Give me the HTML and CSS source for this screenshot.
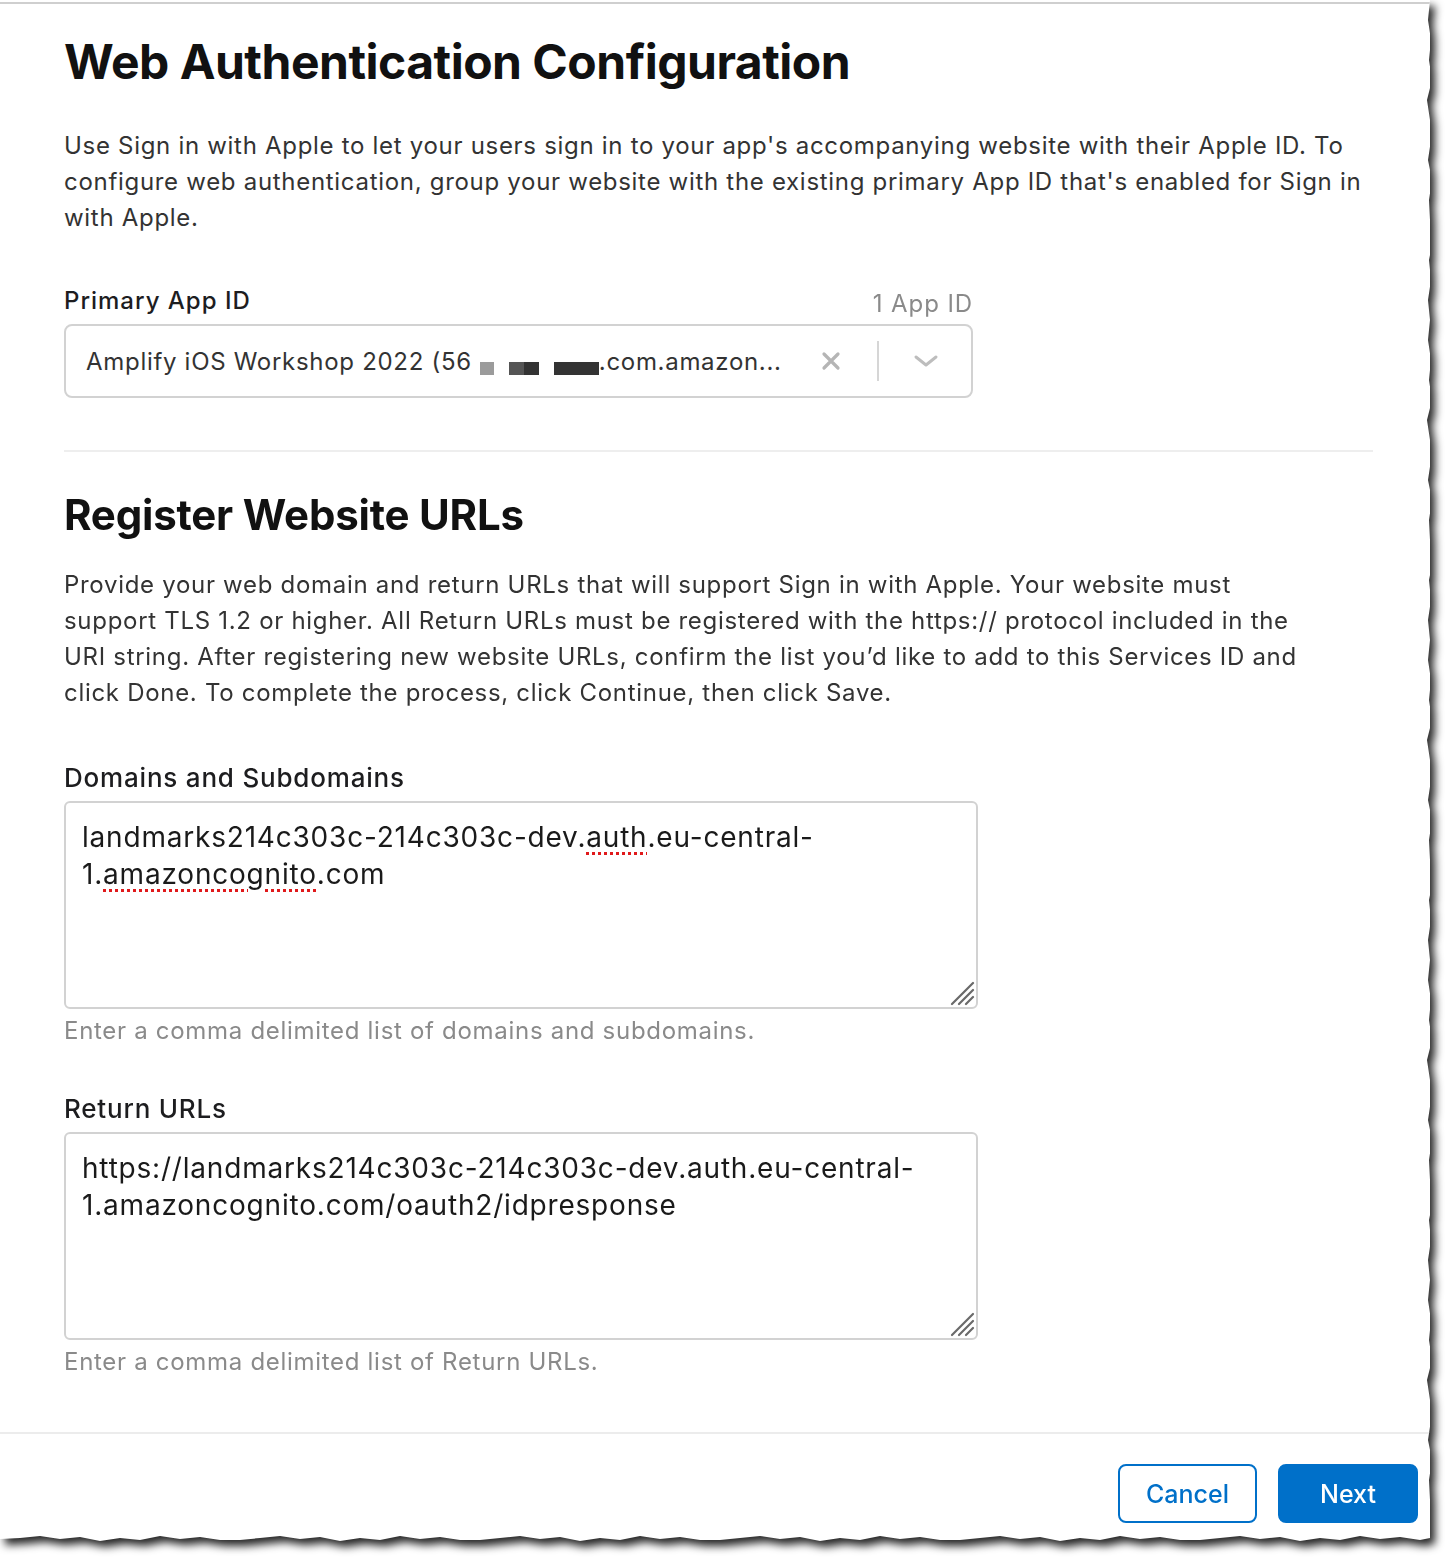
FILE: index.html
```html
<!DOCTYPE html>
<html lang="en">
<head>
<meta charset="utf-8">
<title>Web Authentication Configuration</title>
<link rel="stylesheet" href="styles.css">
</head>
<body>
<div class="frame">
  <div class="page">
    <div class="sheet">
      <main class="main">
        <h1 class="title">Web Authentication Configuration</h1>
        <p class="lead">Use Sign in with Apple to let your users sign in to your app's accompanying website with their Apple ID. To<br>configure web authentication, group your website with the existing primary App ID that's enabled for Sign in<br>with Apple.</p>

        <div class="field-head">
          <span class="label">Primary App ID</span>
          <span class="count">1 App ID</span>
        </div>
        <div class="select">
          <div class="select-value">
            <span>Amplify iOS Workshop 2022 (56</span>
            <span class="redact r1"></span>
            <span class="redact r2"></span>
            <span class="redact r3"></span>
            <span>.com.amazon...</span>
          </div>
          <div class="select-actions">
            <svg class="clear" width="20" height="20" viewBox="0 0 20 20"><path d="M3 3 L17 17 M17 3 L3 17" stroke="#b5b5b5" stroke-width="3.2" stroke-linecap="round" fill="none"/></svg>
            <span class="vsep"></span>
            <svg class="chev" width="26" height="16" viewBox="0 0 26 16"><path d="M3 4 L13 12 L23 4" stroke="#bdbdbd" stroke-width="3" stroke-linecap="round" stroke-linejoin="round" fill="none"/></svg>
          </div>
        </div>

        <hr class="divider">

        <h2 class="subtitle">Register Website URLs</h2>
        <p class="lead lead2">Provide your web domain and return URLs that will support Sign in with Apple. Your website must<br>support TLS 1.2 or higher. All Return URLs must be registered with the https:// protocol included in the<br>URI string. After registering new website URLs, confirm the list you’d like to add to this Services ID and<br>click Done. To complete the process, click Continue, then click Save.</p>

        <div class="label block-label">Domains and Subdomains</div>
        <div class="textarea">
          <div class="ta-text">landmarks214c303c-214c303c-dev.<span class="spell">auth</span>.eu-central-<br>1.<span class="spell">amazoncognito</span>.com</div>
          <svg class="grip" width="26" height="26" viewBox="0 0 26 26"><path d="M24 3 L3 24 M24 10 L10 24 M24 17 L17 24" stroke="#6a6a6a" stroke-width="2.2" stroke-linecap="round" fill="none"/></svg>
        </div>
        <div class="hint">Enter a comma delimited list of domains and subdomains.</div>

        <div class="label block-label second">Return URLs</div>
        <div class="textarea">
          <div class="ta-text">https://landmarks214c303c-214c303c-dev.auth.eu-central-<br>1.amazoncognito.com/oauth2/idpresponse</div>
          <svg class="grip" width="26" height="26" viewBox="0 0 26 26"><path d="M24 3 L3 24 M24 10 L10 24 M24 17 L17 24" stroke="#6a6a6a" stroke-width="2.2" stroke-linecap="round" fill="none"/></svg>
        </div>
        <div class="hint">Enter a comma delimited list of Return URLs.</div>
      </main>
      <footer class="footer">
        <button class="btn btn-secondary" type="button">Cancel</button>
        <button class="btn btn-primary" type="button">Next</button>
      </footer>
    </div>
  </div>
</div>
</body>
</html>
```
FILE: styles.css
```css
* { box-sizing: border-box; }

html, body {
  margin: 0;
  padding: 0;
  background: #ffffff;
}

body {
  font-family: Inter, "Noto Sans", "Liberation Sans", sans-serif;
  color: #1d1d1f;
  width: 1452px;
  height: 1562px;
  overflow: hidden;
}

.frame {
  width: 1430px;
  height: 1541px;
  filter: drop-shadow(5px 6px 4px rgba(0, 0, 0, 0.85));
}

.page {
  width: 100%;
  height: 100%;
  background: #ffffff;
  padding-top: 2px;
  display: flex;
  flex-direction: column;
  clip-path: polygon(
    0 0, 1430px 0,
    1428px 20px, 1431px 40px, 1429px 60px, 1432px 80px, 1427px 100px, 1430px 120px, 1431px 140px, 1428px 160px,
    1432px 180px, 1429px 200px, 1430px 220px, 1433px 240px, 1429px 260px, 1431px 280px, 1428px 300px, 1430px 320px,
    1428px 340px, 1431px 360px, 1429px 380px, 1432px 400px, 1427px 420px, 1430px 440px, 1431px 460px, 1428px 480px,
    1432px 500px, 1429px 520px, 1430px 540px, 1433px 560px, 1429px 580px, 1431px 600px, 1428px 620px, 1430px 640px,
    1428px 660px, 1431px 680px, 1429px 700px, 1432px 720px, 1427px 740px, 1430px 760px, 1431px 780px, 1428px 800px,
    1432px 820px, 1429px 840px, 1430px 860px, 1433px 880px, 1429px 900px, 1431px 920px, 1428px 940px, 1430px 960px,
    1428px 980px, 1431px 1000px, 1429px 1020px, 1432px 1040px, 1427px 1060px, 1430px 1080px, 1431px 1100px, 1428px 1120px,
    1432px 1140px, 1429px 1160px, 1430px 1180px, 1433px 1200px, 1429px 1220px, 1431px 1240px, 1428px 1260px, 1430px 1280px,
    1428px 1300px, 1431px 1320px, 1429px 1340px, 1432px 1360px, 1427px 1380px, 1430px 1400px, 1431px 1420px, 1428px 1440px,
    1432px 1460px, 1429px 1480px, 1430px 1500px, 1433px 1520px, 1430px 1538px,
    1420px 1540px, 1400px 1537px, 1380px 1539px, 1360px 1536px, 1340px 1540px, 1320px 1538px, 1300px 1541px, 1280px 1537px,
    1260px 1539px, 1240px 1536px, 1220px 1538px, 1200px 1540px, 1180px 1540px, 1160px 1537px, 1140px 1539px, 1120px 1536px,
    1100px 1540px, 1080px 1538px, 1060px 1541px, 1040px 1537px, 1020px 1539px, 1000px 1536px, 980px 1538px, 960px 1540px,
    940px 1540px, 920px 1537px, 900px 1539px, 880px 1536px, 860px 1540px, 840px 1538px, 820px 1541px, 800px 1537px,
    780px 1539px, 760px 1536px, 740px 1538px, 720px 1540px, 700px 1540px, 680px 1537px, 660px 1539px, 640px 1536px,
    620px 1540px, 600px 1538px, 580px 1541px, 560px 1537px, 540px 1539px, 520px 1536px, 500px 1538px, 480px 1540px,
    460px 1540px, 440px 1537px, 420px 1539px, 400px 1536px, 380px 1540px, 360px 1538px, 340px 1541px, 320px 1537px,
    300px 1539px, 280px 1536px, 260px 1538px, 240px 1540px, 220px 1540px, 200px 1537px, 180px 1539px, 160px 1536px,
    140px 1540px, 120px 1538px, 100px 1541px, 80px 1537px, 60px 1539px, 40px 1536px, 20px 1538px, 0 1539px
  );
}

.sheet {
  flex: 1;
  display: flex;
  flex-direction: column;
  border-top: 2px solid #cfcfcf;
}

.main {
  flex: 1;
  padding: 0 57px 0 64px;
}

.title {
  margin: 29px 0 0;
  font-size: 48px;
  line-height: 58px;
  font-weight: 700;
  letter-spacing: -0.5px;
  color: #111111;
}

.lead {
  margin: 37px 0 0;
  width: 1360px;
  font-size: 24px;
  line-height: 36px;
  font-weight: 400;
  letter-spacing: 0.7px;
  color: #333333;
}

.field-head {
  margin-top: 49px;
  width: 909px;
  display: flex;
  justify-content: space-between;
  align-items: flex-end;
}

.label {
  font-size: 24px;
  line-height: 32px;
  font-weight: 500;
  letter-spacing: 1px;
  color: #1d1d1f;
}

.count {
  font-size: 24px;
  line-height: 32px;
  letter-spacing: 0.9px;
  color: #8a8a8a;
  position: relative;
  top: 3px;
}

.select {
  margin-top: 7px;
  width: 909px;
  height: 74px;
  border: 2px solid #d2d2d2;
  border-radius: 8px;
  display: flex;
  align-items: center;
  justify-content: space-between;
  padding: 0 32px 0 20px;
}

.select-value {
  display: flex;
  align-items: center;
  font-size: 24px;
  letter-spacing: 0.7px;
  color: #333333;
  white-space: nowrap;
}

.redact {
  display: inline-block;
  height: 13px;
  margin-top: 15px;
}

.r1 { width: 14px; background: #9b9b9b; margin-left: 8px; }
.r2 { width: 30px; margin-left: 15px; background: linear-gradient(90deg, #555555 50%, #333333 50%); }
.r3 { width: 45px; margin-left: 15px; background: #333333; }

.select-actions {
  display: flex;
  align-items: center;
}

.clear { margin-right: 36px; }

.vsep {
  width: 2px;
  height: 40px;
  background: #d6d6d6;
  margin-right: 34px;
}

.divider {
  margin: 52px 0 0;
  border: 0;
  height: 2px;
  background: #eeeeee;
  width: 1309px;
}

.subtitle {
  margin: 36px 0 0;
  font-size: 42px;
  line-height: 54px;
  font-weight: 700;
  letter-spacing: -0.2px;
  color: #111111;
}

.lead2 { margin-top: 25px; }

.block-label {
  margin-top: 51px;
  font-size: 26px;
  letter-spacing: 0.8px;
}
.block-label.second { margin-top: 46px; }

.textarea {
  position: relative;
  margin-top: 7px;
  width: 914px;
  height: 208px;
  border: 2px solid #d2d2d2;
  border-radius: 6px;
  padding: 16px 16px;
}

.ta-text {
  font-size: 28px;
  line-height: 37px;
  letter-spacing: 0.8px;
  color: #1a1a1a;
  white-space: nowrap;
}

.spell {
  text-decoration: underline dotted #e0191b;
  text-decoration-thickness: 3px;
  text-underline-offset: 5px;
}

.grip {
  position: absolute;
  right: 1px;
  bottom: 1px;
}

.hint {
  margin-top: 6px;
  font-size: 24px;
  line-height: 32px;
  letter-spacing: 0.7px;
  color: #8a8a8a;
}

.footer {
  height: 109px;
  border-top: 2px solid #ececec;
  display: flex;
  justify-content: flex-end;
  align-items: flex-start;
  gap: 21px;
  padding: 30px 12px 0 0;
}

.btn {
  height: 59px;
  border-radius: 8px;
  font-family: Inter, "Noto Sans", "Liberation Sans", sans-serif;
  font-size: 25px;
  font-weight: 500;
  cursor: pointer;
}

.btn-secondary {
  width: 139px;
  background: #ffffff;
  color: #0070c9;
  border: 2px solid #0070c9;
}

.btn-primary {
  width: 140px;
  background: #0070c9;
  color: #ffffff;
  border: 2px solid #0070c9;
}
```
